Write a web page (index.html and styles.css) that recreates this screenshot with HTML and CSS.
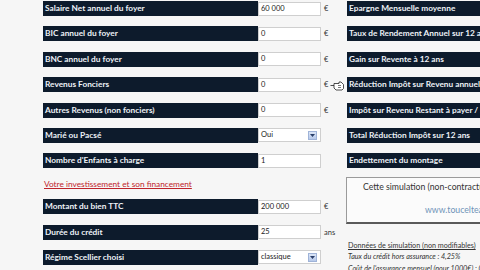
FILE: index.html
```html
<!DOCTYPE html>
<html lang="fr">
<head>
<meta charset="utf-8">
<link rel="stylesheet" href="styles.css">
</head>
<body>
<div class="page">
  <div class="col-left">
    <div class="row"><div class="label">Salaire Net annuel du foyer</div><div class="field">60 000</div><div class="unit">€</div></div>
    <div class="row"><div class="label">BIC annuel du foyer</div><div class="field">0</div><div class="unit">€</div></div>
    <div class="row"><div class="label">BNC annuel du foyer</div><div class="field">0</div><div class="unit">€</div></div>
    <div class="row"><div class="label">Revenus Fonciers</div><div class="field">0</div><div class="unit cursor-host">€
      <svg class="cursor" width="14" height="11" viewBox="0 0 14 11"><path d="M0.5 5.5 H4 M4 3.5 H9 V2 H11 L13.5 4.5 V8.5 L12 10 H6 L4 8 Z" fill="#fff" stroke="#222" stroke-width="0.8"/><path d="M8 5.5 H11 M8 7.5 H11" stroke="#222" stroke-width="0.6"/></svg>
    </div></div>
    <div class="row"><div class="label">Autres Revenus (non fonciers)</div><div class="field">0</div><div class="unit">€</div></div>
    <div class="row"><div class="label">Marié ou Pacsé</div><div class="field select">Oui<span class="arrow"><svg width="7" height="5" viewBox="0 0 7 5"><path d="M1 1 L3.5 4 L6 1 Z" fill="#2a3f6a"/></svg></span></div><div class="unit"></div></div>
    <div class="row"><div class="label">Nombre d'Enfants à charge</div><div class="field">1</div><div class="unit"></div></div>
    <div class="link-row"><span class="link">Votre investissement et son financement</span></div>
    <div class="row"><div class="label">Montant du bien TTC</div><div class="field">200 000</div><div class="unit">€</div></div>
    <div class="row"><div class="label">Durée du crédit</div><div class="field">25</div><div class="unit">ans</div></div>
    <div class="row"><div class="label">Régime Scellier choisi</div><div class="field select">classique<span class="arrow"><svg width="7" height="5" viewBox="0 0 7 5"><path d="M1 1 L3.5 4 L6 1 Z" fill="#2a3f6a"/></svg></span></div><div class="unit"></div></div>
  </div>
  <div class="col-right">
    <div class="row"><div class="label wide">Epargne Mensuelle moyenne</div></div>
    <div class="row"><div class="label wide">Taux de Rendement Annuel sur 12 ans</div></div>
    <div class="row"><div class="label wide">Gain sur Revente à 12 ans</div></div>
    <div class="row"><div class="label wide">Réduction Impôt sur Revenu annuel avec Scellier</div></div>
    <div class="row"><div class="label wide">Impôt sur Revenu Restant à payer / an</div></div>
    <div class="row"><div class="label wide">Total Réduction Impôt sur 12 ans</div></div>
    <div class="row"><div class="label wide">Endettement du montage</div></div>
    <div class="notice">
      <div class="notice-line1">Cette simulation (non-contractuelle) vous est proposée par</div>
      <div class="notice-line2">www.toucelteam.fr</div>
    </div>
    <div class="data">
      <div class="data-title">Données de simulation (non modifiables)</div>
      <div class="data-line">Taux du crédit hors assurance : 4,25%</div>
      <div class="data-line">Coût de l'assurance mensuel (pour 1000€) : 0,36 €</div>
    </div>
  </div>
</div>
</body>
</html>
```

FILE: styles.css
```css
html, body {
  margin: 0;
  padding: 0;
}
body {
  background: #f6f6f6;
  font-family: Lato, "Open Sans", sans-serif;
  width: 480px;
  height: 270px;
  overflow: hidden;
}
.page {
  display: grid;
  grid-template-columns: 304px 133px;
  padding-left: 43px;
  padding-top: 1px;
}
.col-left, .col-right {
  display: flex;
  flex-direction: column;
  min-width: 0;
}
.row {
  display: flex;
  height: 15px;
  margin-bottom: 10.4px;
  flex-shrink: 0;
}
.label {
  width: 215px;
  background: #0d1b2c;
  color: #eef2f7;
  font-weight: 700;
  font-size: 8.3px;
  line-height: 15px;
  padding-left: 2px;
  box-sizing: border-box;
  white-space: nowrap;
  overflow: hidden;
}
.label.wide {
  width: 160px;
}
.field {
  width: 63px;
  height: 14px;
  margin-top: 0.5px;
  box-sizing: border-box;
  background: #fff;
  border: 1px solid #cfcfcf;
  font-size: 7.5px;
  line-height: 12px;
  padding-left: 2px;
  color: #222;
}
.field.select {
  display: flex;
  justify-content: space-between;
  padding-right: 3px;
}
.arrow {
  width: 9px;
  height: 9px;
  margin-top: 1.5px;
  background: linear-gradient(#dce6f7, #b7c9ea);
  border: 1px solid #9fb3d8;
  box-sizing: border-box;
  display: flex;
  align-items: center;
  justify-content: center;
}
.unit {
  padding-left: 3px;
  font-size: 7.5px;
  line-height: 15px;
  color: #333;
  position: relative;
}
.cursor {
  position: absolute;
  left: 9px;
  top: 3px;
}
.link-row {
  height: 10px;
  margin-bottom: 10.4px;
  font-size: 8.3px;
  line-height: 10px;
  padding-left: 1px;
  white-space: nowrap;
}
.link {
  color: #c0242c;
  text-decoration: underline;
}
.notice {
  margin-top: -1.8px;
  height: 47px;
  width: 150px;
  box-sizing: border-box;
  border: 1px solid #9a9a9a;
  border-bottom: 2px solid #5a5a5a;
  border-right: none;
  background: #fbfbfb;
  margin-left: -1px;
  font-size: 8.7px;
  color: #333;
  white-space: nowrap;
  overflow: hidden;
}
.notice-line1 {
  padding-left: 16px;
  margin-top: 3px;
  line-height: 11px;
}
.notice-line2 {
  padding-left: 78px;
  margin-top: 12px;
  line-height: 11px;
  color: #6f93b8;
}
.data {
  margin-top: 16px;
  font-size: 7.2px;
  color: #333;
  white-space: nowrap;
  padding-left: 1px;
}
.data-title {
  line-height: 11.5px;
  text-decoration: underline;
}
.data-line {
  line-height: 11.5px;
  font-style: italic;
}
```
